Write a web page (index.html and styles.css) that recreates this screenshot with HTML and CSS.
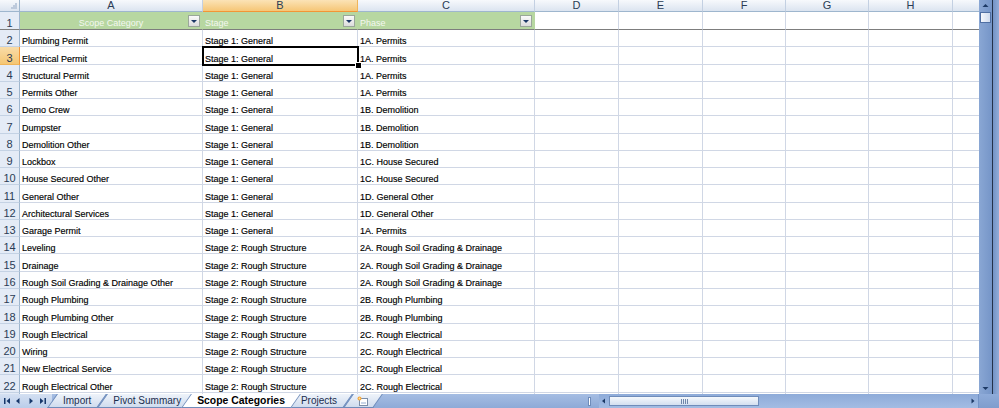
FILE: index.html
```html
<!DOCTYPE html>
<html>
<head>
  <title>Scope Categories</title>
  <link rel="stylesheet" href="styles.css">
</head>
<body>
  <div class="excel">
    <div class="main">
      <div class="sheet">
        <table class="grid">
          <colgroup>
            <col class="w-rh"><col class="w-a"><col class="w-b"><col class="w-c">
            <col class="w-d"><col class="w-d"><col class="w-f"><col class="w-f"><col class="w-d"><col class="w-d">
          </colgroup>
          <thead>
            <tr class="col-heads">
              <th class="corner"></th><th>A</th><th class="sel">B</th><th>C</th><th>D</th>
              <th>E</th><th>F</th><th>G</th><th>H</th><th></th>
            </tr>
          </thead>
          <tbody>
            <tr class="table-head">
              <th class="rh">1</th>
              <td class="tcell center">Scope Category<span class="filter"></span></td>
              <td class="tcell">Stage<span class="filter"></span></td>
              <td class="tcell">Phase<span class="filter"></span></td>
              <td></td><td></td><td></td><td></td><td></td><td></td>
            </tr>
            <tr><th class="rh">2</th><td>Plumbing Permit</td><td>Stage 1: General</td><td>1A. Permits</td><td></td><td></td><td></td><td></td><td></td><td></td></tr>
            <tr><th class="rh sel">3</th><td>Electrical Permit</td><td class="active">Stage 1: General</td><td>1A. Permits</td><td></td><td></td><td></td><td></td><td></td><td></td></tr>
            <tr><th class="rh">4</th><td>Structural Permit</td><td>Stage 1: General</td><td>1A. Permits</td><td></td><td></td><td></td><td></td><td></td><td></td></tr>
            <tr><th class="rh">5</th><td>Permits Other</td><td>Stage 1: General</td><td>1A. Permits</td><td></td><td></td><td></td><td></td><td></td><td></td></tr>
            <tr><th class="rh">6</th><td>Demo Crew</td><td>Stage 1: General</td><td>1B. Demolition</td><td></td><td></td><td></td><td></td><td></td><td></td></tr>
            <tr><th class="rh">7</th><td>Dumpster</td><td>Stage 1: General</td><td>1B. Demolition</td><td></td><td></td><td></td><td></td><td></td><td></td></tr>
            <tr><th class="rh">8</th><td>Demolition Other</td><td>Stage 1: General</td><td>1B. Demolition</td><td></td><td></td><td></td><td></td><td></td><td></td></tr>
            <tr><th class="rh">9</th><td>Lockbox</td><td>Stage 1: General</td><td>1C. House Secured</td><td></td><td></td><td></td><td></td><td></td><td></td></tr>
            <tr><th class="rh">10</th><td>House Secured Other</td><td>Stage 1: General</td><td>1C. House Secured</td><td></td><td></td><td></td><td></td><td></td><td></td></tr>
            <tr><th class="rh">11</th><td>General Other</td><td>Stage 1: General</td><td>1D. General Other</td><td></td><td></td><td></td><td></td><td></td><td></td></tr>
            <tr><th class="rh">12</th><td>Architectural Services</td><td>Stage 1: General</td><td>1D. General Other</td><td></td><td></td><td></td><td></td><td></td><td></td></tr>
            <tr><th class="rh">13</th><td>Garage Permit</td><td>Stage 1: General</td><td>1A. Permits</td><td></td><td></td><td></td><td></td><td></td><td></td></tr>
            <tr><th class="rh">14</th><td>Leveling</td><td>Stage 2: Rough Structure</td><td>2A. Rough Soil Grading &amp; Drainage</td><td></td><td></td><td></td><td></td><td></td><td></td></tr>
            <tr><th class="rh">15</th><td>Drainage</td><td>Stage 2: Rough Structure</td><td>2A. Rough Soil Grading &amp; Drainage</td><td></td><td></td><td></td><td></td><td></td><td></td></tr>
            <tr><th class="rh">16</th><td>Rough Soil Grading &amp; Drainage Other</td><td>Stage 2: Rough Structure</td><td>2A. Rough Soil Grading &amp; Drainage</td><td></td><td></td><td></td><td></td><td></td><td></td></tr>
            <tr><th class="rh">17</th><td>Rough Plumbing</td><td>Stage 2: Rough Structure</td><td>2B. Rough Plumbing</td><td></td><td></td><td></td><td></td><td></td><td></td></tr>
            <tr><th class="rh">18</th><td>Rough Plumbing Other</td><td>Stage 2: Rough Structure</td><td>2B. Rough Plumbing</td><td></td><td></td><td></td><td></td><td></td><td></td></tr>
            <tr><th class="rh">19</th><td>Rough Electrical</td><td>Stage 2: Rough Structure</td><td>2C. Rough Electrical</td><td></td><td></td><td></td><td></td><td></td><td></td></tr>
            <tr><th class="rh">20</th><td>Wiring</td><td>Stage 2: Rough Structure</td><td>2C. Rough Electrical</td><td></td><td></td><td></td><td></td><td></td><td></td></tr>
            <tr><th class="rh">21</th><td>New Electrical Service</td><td>Stage 2: Rough Structure</td><td>2C. Rough Electrical</td><td></td><td></td><td></td><td></td><td></td><td></td></tr>
            <tr><th class="rh">22</th><td>Rough Electrical Other</td><td>Stage 2: Rough Structure</td><td>2C. Rough Electrical</td><td></td><td></td><td></td><td></td><td></td><td></td></tr>
            <tr><th class="rh"></th><td></td><td></td><td></td><td></td><td></td><td></td><td></td><td></td><td></td></tr>
          </tbody>
        </table>
      </div>
      <div class="vscroll">
        <svg class="arrow" width="13" height="11" viewBox="0 0 13 11"><path d="M3.5 7 L6.5 4 L9.5 7 Z" fill="#1d3a66"/></svg>
        <div class="vthumb"></div>
        <div class="vtrack"></div>
        <svg class="arrow" width="13" height="11" viewBox="0 0 13 11"><path d="M3.5 4 L6.5 7 L9.5 4 Z" fill="#1d3a66"/></svg>
      </div>
      <div class="edge"></div>
      <div class="frame"></div>
    </div>
    <div class="bottom">
      <svg class="nav" width="52" height="14" viewBox="0 0 52 14">
        <g fill="#17386b">
          <rect x="4" y="4" width="1.5" height="6"/><path d="M10 4 L6.5 7 L10 10 Z"/>
          <path d="M19.5 4 L16 7 L19.5 10 Z"/>
          <path d="M29.5 4 L33 7 L29.5 10 Z"/>
          <path d="M40 4 L43.5 7 L40 10 Z"/><rect x="44.5" y="4" width="1.5" height="6"/>
        </g>
      </svg>
      <div class="tabs">
        <div class="tab">Import</div>
        <div class="tab">Pivot Summary</div>
        <div class="tab current">Scope Categories</div>
        <div class="tab">Projects</div>
        <div class="tab add">
          <svg width="13" height="11" viewBox="0 0 13 11">
            <rect x="3.5" y="2.5" width="8" height="7" fill="#fff" stroke="#7c8ea8"/>
            <rect x="5" y="6" width="5" height="2" fill="#c9d6e8"/>
            <circle cx="3.5" cy="2.5" r="2" fill="#f3a33a"/>
            <circle cx="3.5" cy="2.5" r="0.9" fill="#ffe39a"/>
          </svg>
        </div>
      </div>
      <div class="split"></div>
      <div class="hscroll">
        <svg class="arrow" width="10" height="14" viewBox="0 0 10 14"><path d="M6 4.5 L3 7 L6 9.5 Z" fill="#1d3a66"/></svg>
        <div class="hthumb"><span class="grip"></span></div>
        <div class="htrack"></div>
        <svg class="arrow" width="10" height="14" viewBox="0 0 10 14"><path d="M3.5 4.5 L6.5 7 L3.5 9.5 Z" fill="#1d3a66"/></svg>
      </div>
      <div class="corner-box"></div>
    </div>
  </div>
</body>
</html>
```
FILE: styles.css
```css
body {
  margin: 0;
  background: #fff;
}

.excel {
  width: 999px;
  height: 408px;
  display: grid;
  grid-template-rows: 394px 14px;
  overflow: hidden;
  font-family: "Liberation Sans", Arial, sans-serif;
}

.main {
  display: grid;
  grid-template-columns: 979px 13px 1px 6px;
  height: 394px;
  overflow: hidden;
}

.sheet {
  overflow: hidden;
  background: #fff;
}

.grid {
  table-layout: fixed;
  border-collapse: separate;
  border-spacing: 0;
  width: 1037px;
}

.w-rh { width: 20px; }
.w-a { width: 183px; }
.w-b { width: 155px; }
.w-c { width: 177px; }
.w-d { width: 84px; }
.w-f { width: 83px; }

.grid td {
  border-right: 1px solid #d0d7e5;
  border-bottom: 1px solid #d0d7e5;
  padding: 0 2px;
  font-size: 9px;
  line-height: 10px;
  color: #000;
  vertical-align: bottom;
  white-space: nowrap;
  overflow: hidden;
  -webkit-text-stroke: 0.15px #000;
}

.grid tbody tr {
  height: 17.28px;
}

/* column letters */
.col-heads {
  height: 12px;
}

.col-heads th {
  padding: 0;
  font-size: 11px;
  line-height: 11px;
  font-weight: normal;
  color: #2a3c55;
  text-align: center;
  background: linear-gradient(#f7f9fc, #dbe4f0);
  border-right: 1px solid #c3d0e2;
  border-bottom: 1px solid #9eb6ce;
}

.col-heads th.sel {
  background: linear-gradient(#fbe3b6, #f5c676);
  border-bottom-color: #f29536;
  border-right-color: #f0b55a;
}

.col-heads th.corner {
  background:
    linear-gradient(135deg, transparent 50%, #bdcadc 50%) right 2px bottom 2px / 7px 7px no-repeat,
    linear-gradient(#f7f9fc, #dbe4f0);
  border-right-color: #9eb6ce;
}

/* row numbers */
.rh {
  padding: 0;
  font-size: 11px;
  line-height: 11px;
  font-weight: normal;
  color: #2a3c55;
  text-align: center;
  vertical-align: bottom;
  background: #e4ebf6;
  border-right: 1px solid #9eb6ce;
  border-bottom: 1px solid #c4d2e4;
}

.rh.sel {
  background: linear-gradient(#f9dca8, #f4c673);
  border-right-color: #f29536;
  border-bottom-color: #f0b55a;
}

/* table header row with filters */
.grid tr.table-head {
  height: 18px;
}

.table-head td,
.table-head .rh {
  border-bottom: 1px solid #7d7d7d;
}

.grid td.tcell {
  position: relative;
  background: #b7d7a1;
  color: #f4f8f0;
  -webkit-text-stroke: 0;
  border-right-color: #b7d7a1;
  padding-bottom: 1px;
}

.grid td.center {
  text-align: center;
}

.filter {
  position: absolute;
  right: 2px;
  bottom: 2px;
  width: 10px;
  height: 10px;
  border: 1px solid #9aa79a;
  background: linear-gradient(#fafafa, #dcdcdc);
}

.filter::after {
  content: "";
  position: absolute;
  left: 2px;
  top: 4px;
  border-left: 3px solid transparent;
  border-right: 3px solid transparent;
  border-top: 3px solid #1c3866;
}

/* active cell */
.grid td.active {
  position: relative;
  overflow: visible;
}

.grid td.active::after {
  content: "";
  position: absolute;
  left: -1px;
  top: -1px;
  right: -2px;
  bottom: -2px;
  border: 2px solid #000;
}

.grid td.active::before {
  content: "";
  position: absolute;
  right: -5px;
  bottom: -5px;
  width: 5px;
  height: 5px;
  background: #000;
  border: 1px solid #fff;
  z-index: 2;
}

/* vertical scrollbar */
.vscroll {
  display: flex;
  flex-direction: column;
  background: linear-gradient(to right, #8aa7d4, #7595c8);
}

.vscroll .arrow {
  display: block;
  flex: none;
}

.vthumb {
  flex: none;
  height: 9px;
  margin: 1px 1px 0;
  border: 1px solid #4f6fa3;
  background: linear-gradient(to right, #f4f7fc, #cfdbee);
}

.vtrack {
  flex: 1;
}

.edge {
  background: #23324a;
}

.frame {
  background: linear-gradient(to right, #7393c6, #92acd8);
}

/* sheet tabs and horizontal scroll */
.bottom {
  display: flex;
  background: linear-gradient(#a5bde3, #8eaad7);
  font-size: 10px;
}

.nav {
  display: block;
  flex: none;
  background: linear-gradient(#d4e0f2, #bacde9);
}

.tabs {
  display: flex;
  flex: none;
  width: 503px;
  isolation: isolate;
}

.tab {
  position: relative;
  padding: 0 11px;
  line-height: 14px;
  color: #1a2d4d;
  white-space: nowrap;
}

.tab::before {
  content: "";
  position: absolute;
  inset: 0 0 0 0;
  z-index: -1;
  background: linear-gradient(#eef3fa, #d0dcee);
  border: 1px solid #6f8cba;
  border-top: none;
  transform: skewX(-35deg);
}

.tab.current {
  margin: 0 -6px;
  font-weight: bold;
  font-size: 10.4px;
  color: #000;
  z-index: 1;
}

.tab.current::before {
  background: #fff;
}

.tab.add {
  padding: 0 9px 0 8px;
  display: flex;
  align-items: center;
}

.split {
  flex: none;
  width: 3px;
  height: 9px;
  margin: 3px 8px 0 33px;
  background: #fff;
  border: 1px solid #6f8cba;
  box-sizing: border-box;
}

.hscroll {
  flex: 1;
  display: flex;
  align-items: center;
  background: linear-gradient(#8eabd9, #a3bce3);
}

.hscroll .arrow {
  display: block;
  flex: none;
}

.hthumb {
  flex: none;
  width: 150px;
  height: 10px;
  box-sizing: border-box;
  border: 1px solid #6f8cba;
  background: linear-gradient(#f5f8fc, #d3dff0);
  display: flex;
  justify-content: center;
  align-items: center;
}

.grip {
  width: 7px;
  height: 5px;
  background: repeating-linear-gradient(to right, #6f86aa 0 1px, transparent 1px 2px);
}

.htrack {
  flex: 1;
}

.corner-box {
  flex: 0 0 20px;
  background: linear-gradient(#8eabd9, #7f9dcd);
  border-left: 1px solid #7393c6;
}
```
